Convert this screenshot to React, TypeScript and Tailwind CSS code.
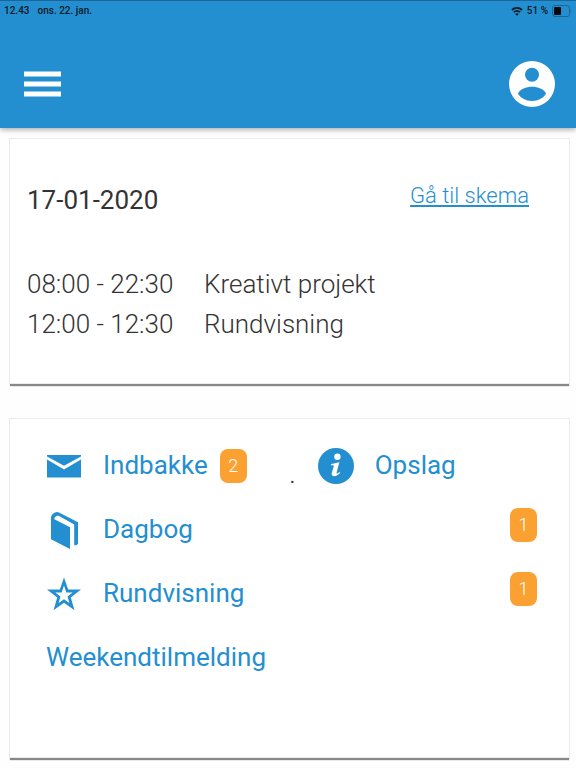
import type { ReactNode } from 'react';

const schedule = [
  { time: '08:00 - 22:30', title: 'Kreativt projekt' },
  { time: '12:00 - 12:30', title: 'Rundvisning' },
];

function WifiIcon() {
  return (
    <svg viewBox="0 0 12 10" className="h-[10px] w-[12px]" fill="none" stroke="#0b1a26" strokeWidth="1.9">
      <path d="M1 4C3.8 1.1 8.2 1.1 11 4" />
      <path d="M3 6.2C4.7 4.5 7.3 4.5 9 6.2" />
      <path d="M6 9.8L4.2 7.9C5.2 7 6.8 7 7.8 7.9Z" fill="#0b1a26" stroke="none" />
    </svg>
  );
}

function BatteryIcon() {
  return (
    <svg viewBox="0 0 20 12" className="h-[12px] w-[20px]">
      <rect x="0.5" y="0.5" width="17" height="11" rx="2.5" fill="none" stroke="#1c6596" />
      <rect x="2" y="2" width="7" height="8" rx="1" fill="#04090d" />
      <path d="M18.7 4.2C19.8 4.8 19.8 7.2 18.7 7.8Z" fill="#1c6596" />
    </svg>
  );
}

function MenuIcon() {
  return (
    <svg viewBox="0 0 37 26" className="h-[26px] w-[37px]" fill="#fff">
      <rect width="37" height="5" y="0.5" />
      <rect y="10.5" width="37" height="5" />
      <rect y="20.5" width="37" height="5" />
    </svg>
  );
}

function AccountIcon() {
  return (
    <svg viewBox="0 0 46 46" className="size-[46px]">
      <circle cx="23" cy="23" r="23" fill="#fff" />
      <circle cx="23" cy="13.8" r="7" fill="#248fd0" />
      <path d="M9 32.3C11.4 28 17 25.8 23 25.8S34.600 28 37 32.300C35 37 29.200 40 23 40S11 37 9 32.300Z" fill="#248fd0" />
    </svg>
  );
}

function MailIcon() {
  return (
    <svg viewBox="0 0 36 24" className="h-6 w-9" fill="#248fd0">
      <path d="M1 1H35V2.600L18 11.700L1 2.600Z" />
      <path d="M1 5.400L18 15.400L35 5.400V23.500H1Z" />
    </svg>
  );
}

function BookIcon() {
  return (
    <svg viewBox="0 0 36 38" className="h-[38px] w-9" fill="#248fd0">
      <path d="M5 6.500L24 16.200V38L5 28.200Z" />
      <path d="M5 8V6C5.800 3.200 8.200 1 11 1L13 1.500L32 11.200V32.500C31.800 34 29 34.700 28.200 34V13.400L12.600 4.800C10.400 4.200 8.600 5.600 8.300 8.300L5 9Z" />
    </svg>
  );
}

function StarIcon() {
  return (
    <svg viewBox="0 0 36 36" className="size-9">
      <path
        fill="#248fd0"
        fillRule="evenodd"
        d="M18 1.500L22.200 13.600H35L24.800 21.500L28.500 34.200L18 26.800L7.500 34.200L11.200 21.500L1 13.600H13.800ZM18 9.500L15.700 16.600H9.300L14.500 20.500L12.600 27L18 23.200L23.400 27L21.500 20.500L26.700 16.600H20.300Z"
      />
    </svg>
  );
}

function InfoIcon() {
  return (
    <svg viewBox="0 0 36 36" className="size-9">
      <circle cx="18" cy="18" r="18" fill="#248fd0" />
      <circle cx="19.400" cy="8.800" r="3.200" fill="#fff" />
      <path d="M13 16.100C15.500 15.700 17.800 14.800 21.400 14.300L18.600 24.600C18.400 25.900 19.600 25.500 21.300 23.900L22.200 24.700C20.300 27 18.300 28.200 16.300 28.200C14 28.200 13.200 26.900 13.900 24.600L15.700 18.400C15.900 17.300 15.200 17.200 13 17.300Z" fill="#fff" />
    </svg>
  );
}

function Badge({ children }: { children: ReactNode }) {
  return (
    <span className="flex h-[34px] w-[27px] items-center justify-center rounded-[8px] bg-[#faa132] text-[18px] font-light text-white">
      {children}
    </span>
  );
}

function MenuLink({ icon, label }: { icon?: ReactNode; label: string }) {
  return (
    <a href="#" className="flex items-center text-[#248fd0]">
      {icon && <span className="mr-[21px] flex w-9 justify-center pt-[2px]">{icon}</span>}
      <span>{label}</span>
    </a>
  );
}

function Card({ className, children }: { className: string; children: ReactNode }) {
  return (
    <section className={`border border-[#eaeaea] bg-white shadow-[0_3px_1px_-1px_#888] ${className}`}>
      {children}
    </section>
  );
}

export default function App() {
  return (
    <div className="min-h-screen bg-[#fefefe] font-['Roboto',sans-serif] text-[26px] leading-[40px] text-[#333]">
      <header className="border-t border-[#1d6596] bg-[#248fd0] pb-[21px] shadow-[0_2px_5px_rgba(0,0,0,0.3)]">
        <div className="flex h-5 items-center justify-between pr-1 pl-1 text-[10px] font-medium text-[#0b1a26]">
          <div className="flex gap-2">
            <span>12.43</span>
            <span>ons. 22. jan.</span>
          </div>
          <div className="flex items-center gap-1">
            <WifiIcon />
            <span>51 %</span>
            <BatteryIcon />
          </div>
        </div>
        <div className="flex items-center justify-between pt-[40px] pr-[21px] pl-6">
          <button type="button" aria-label="Menu">
            <MenuIcon />
          </button>
          <button type="button" aria-label="Profil">
            <AccountIcon />
          </button>
        </div>
      </header>

      <main className="flex flex-col gap-[34px] pt-[10px] pr-[6px] pb-[9px] pl-[9px]">
        <Card className="pt-[41px] pr-[40px] pb-[39px] pl-[17px]">
          <div className="flex items-start justify-between">
            <h1>17-01-2020</h1>
            <a href="#" className="pt-[1px] text-[22px] leading-[30px] font-light text-[#248fd0] underline decoration-2 underline-offset-2">
              Gå til skema
            </a>
          </div>
          <ul className="mt-[44px] font-light">
            {schedule.map((entry) => (
              <li key={entry.time} className="flex">
                <span className="w-[177px]">{entry.time}</span>
                <span>{entry.title}</span>
              </li>
            ))}
          </ul>
        </Card>

        <Card className="pt-[14px] pr-[32px] pb-[68px] pl-9">
          <nav>
            <div className="flex h-16 items-center">
              <MenuLink icon={<MailIcon />} label="Indbakke" />
              <span className="ml-[12px] pt-[2px]">
                <Badge>2</Badge>
              </span>
              <span className="ml-[43px] w-[28px] pt-[22px] text-[20px]">.</span>
              <MenuLink icon={<InfoIcon />} label="Opslag" />
            </div>
            <div className="flex h-16 items-center justify-between">
              <MenuLink icon={<BookIcon />} label="Dagbog" />
              <span className="pb-2">
                <Badge>1</Badge>
              </span>
            </div>
            <div className="flex h-16 items-center justify-between">
              <MenuLink icon={<StarIcon />} label="Rundvisning" />
              <span className="pb-2">
                <Badge>1</Badge>
              </span>
            </div>
            <div className="flex h-16 items-center">
              <MenuLink label="Weekendtilmelding" />
            </div>
          </nav>
        </Card>
      </main>
    </div>
  );
}
